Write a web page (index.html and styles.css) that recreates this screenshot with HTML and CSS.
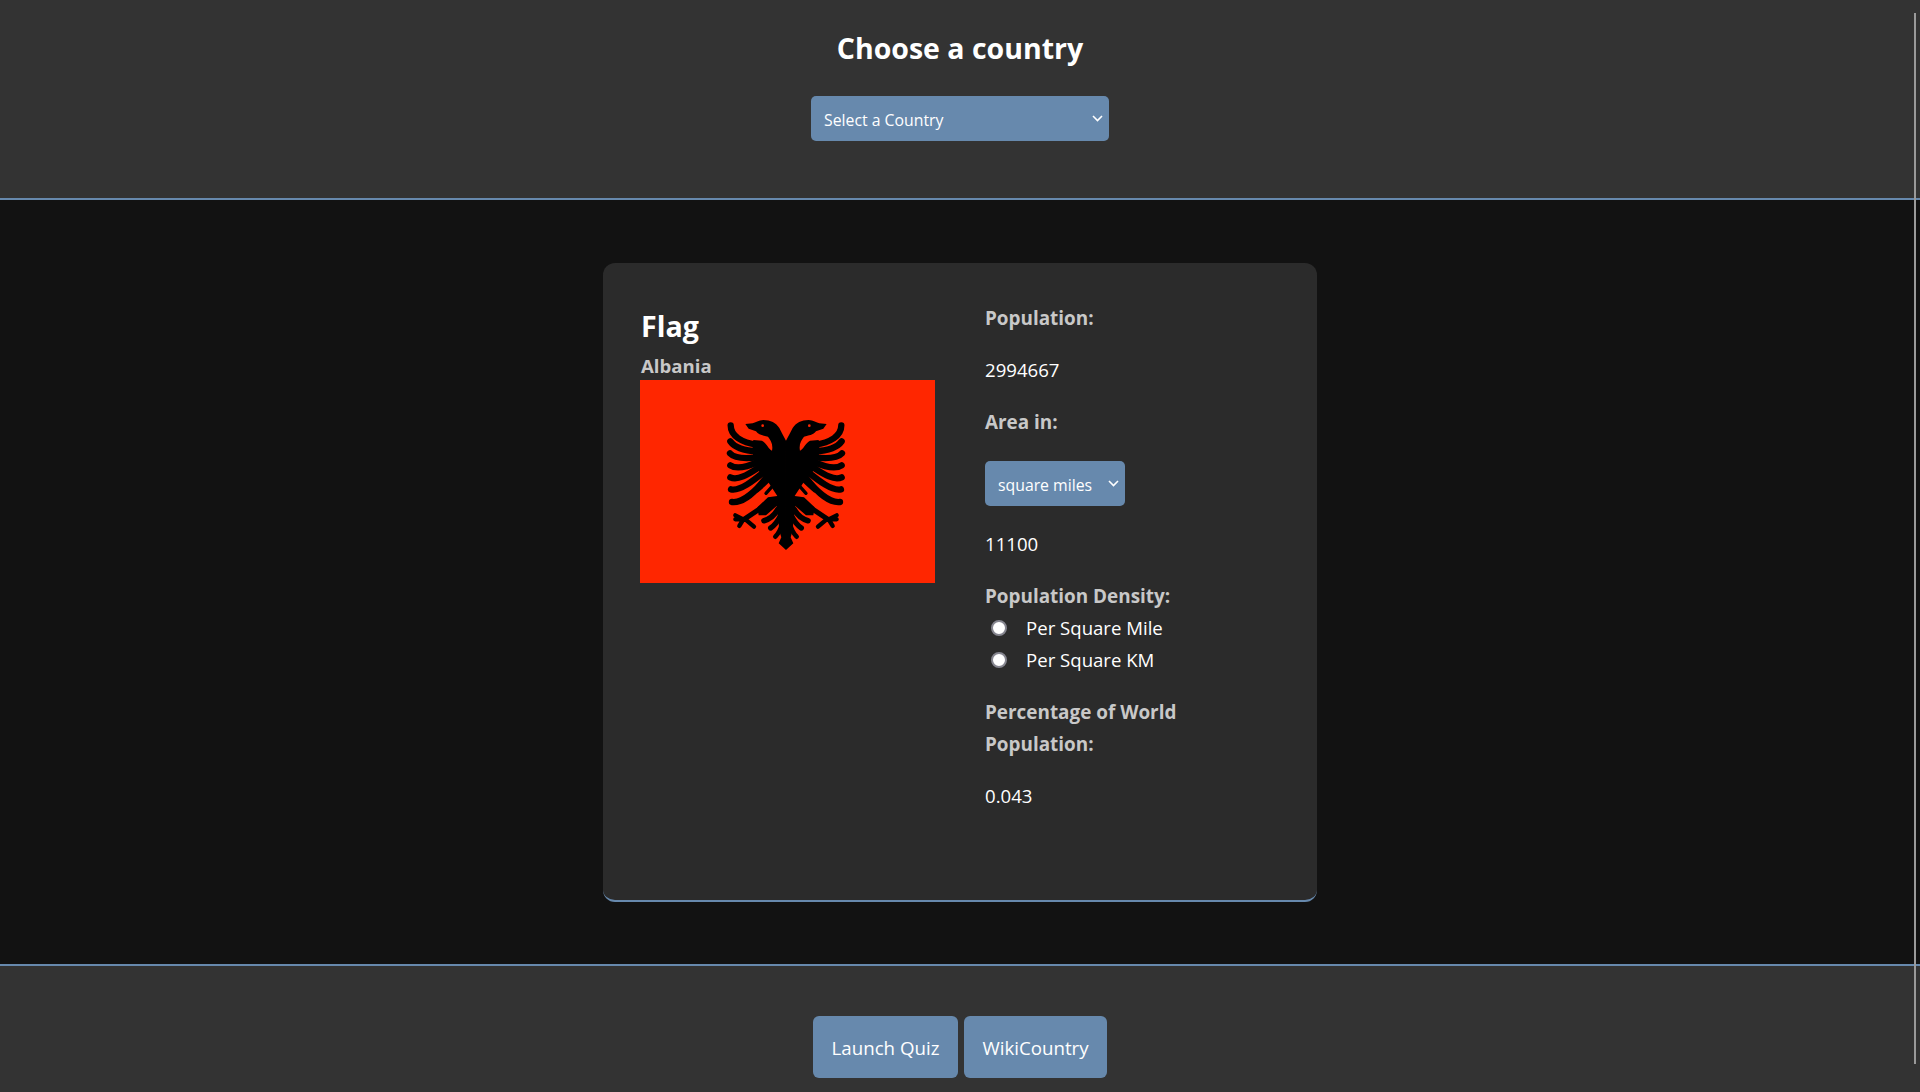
FILE: index.html
```html
<!DOCTYPE html>
<html lang="en">
<head>
<meta charset="utf-8">
<title>Choose a country</title>
<link rel="stylesheet" href="styles.css">
</head>
<body>
<div class="page">
  <header class="top">
    <h1 class="title">Choose a country</h1>
    <div class="select-wrap wrap-country">
      <select class="select"><option>Select a Country</option></select>
      <svg class="chev" viewBox="0 0 11 7"><path d="M1 1l4.5 4.5L10 1" fill="none" stroke="#fff" stroke-width="1.6"/></svg>
    </div>
  </header>
  <main class="main">
    <section class="card">
      <div class="col-flag">
        <h2 class="flag-title">Flag</h2>
        <div class="country-name">Albania</div>
        <svg class="flag" viewBox="0 0 295 203" aria-label="Flag of Albania">
          <rect width="295" height="203" fill="#ff2600"/>
          <g transform="translate(60 20) scale(0.3333)">
            <g id="half" fill="none" stroke="#000" stroke-linecap="round" stroke-linejoin="round">
              <path fill="#000" stroke="none" d="M258 122C250 108 245 98 238 84C228 68 212 60 190 60C176 60 166 68 158 70L136 72L146 86L168 94C176 106 190 106 204 110C212 120 220 134 216 152C206 148 202 132 186 122L160 120C154 150 160 190 178 215L206 248L232 288L204 292L172 322L176 346L198 346L230 318C236 345 234 385 244 412L236 430L258 450L258 122Z"/>
              <path stroke-width="19" d="M92 76C92 108 125 128 172 134"/>
              <path stroke-width="19" d="M91 124C105 144 135 152 172 154"/>
              <path stroke-width="19" d="M90 160C105 176 140 176 172 172"/>
              <path stroke-width="19" d="M91 196C110 209 145 199 174 186"/>
              <path stroke-width="19" d="M91 232C115 244 150 219 180 200"/>
              <path stroke-width="19" d="M93 268C120 274 160 242 192 216"/>
              <path stroke-width="19" d="M96 306C130 310 170 270 196 236"/>
              <path stroke-width="11" d="M172 272C186 260 200 246 212 236"/>
              <path stroke-width="10" d="M198 280L218 258"/>
              <path stroke-width="15" d="M186 322L132 358"/>
              <path stroke-width="13" d="M130 358L106 346M130 358L106 358M130 358L118 378M136 358L162 380"/>
              <path stroke-width="17" d="M192 362C208 358 222 348 234 328"/>
              <path stroke-width="16" d="M212 384C224 376 234 362 242 346"/>
              <path stroke-width="14" d="M226 410C236 400 242 388 246 372"/>
            </g>
            <use href="#half" transform="translate(516 0) scale(-1 1)"/>
            <circle cx="188" cy="77" r="4" fill="#ff2600"/>
            <circle cx="328" cy="77" r="4" fill="#ff2600"/>
          </g>
        </svg>
      </div>
      <div class="col-data">
        <p class="label">Population:</p>
        <p class="value">2994667</p>
        <p class="label">Area in:</p>
        <div class="select-wrap wrap-unit">
          <select class="select"><option>square miles</option></select>
          <svg class="chev" viewBox="0 0 11 7"><path d="M1 1l4.5 4.5L10 1" fill="none" stroke="#fff" stroke-width="1.6"/></svg>
        </div>
        <p class="value">11100</p>
        <p class="label label-tight">Population Density:</p>
        <label class="radio-row"><input class="radio" type="radio" name="density"><span>Per Square Mile</span></label>
        <label class="radio-row"><input class="radio" type="radio" name="density"><span>Per Square KM</span></label>
        <p class="label label-spaced">Percentage of World Population:</p>
        <p class="value">0.043</p>
      </div>
    </section>
  </main>
  <footer class="bottom">
    <button class="btn btn-quiz" type="button">Launch Quiz</button>
    <button class="btn btn-wiki" type="button">WikiCountry</button>
  </footer>
</div>
<div class="scroll-thumb"></div>
</body>
</html>
```
FILE: styles.css
```css
html, body {
  margin: 0;
  height: 100%;
  overflow: hidden;
}
body {
  background: #121212;
  color: #fff;
  font-family: "Open Sans", "Noto Sans", sans-serif;
  font-size: 18.6px;
  line-height: 32px;
}
.page {
  display: flex;
  flex-direction: column;
  height: 1092px;
}
.top {
  height: 198px;
  background: #333;
  border-bottom: 2px solid #6789ad;
  display: flex;
  flex-direction: column;
  align-items: center;
  flex: none;
}
.title {
  margin: 28px 0 0;
  font-size: 28.5px;
  line-height: 40px;
  font-weight: 700;
}
.select-wrap {
  position: relative;
  height: 45px;
}
.wrap-country {
  width: 298px;
  margin-top: 28px;
}
.wrap-unit {
  width: 140px;
  margin-top: 23px;
}
.select {
  appearance: none;
  display: block;
  width: 100%;
  height: 45px;
  background: #6789ad;
  color: #fff;
  border: none;
  border-radius: 5px;
  font-family: inherit;
  font-size: 15.8px;
  padding: 2px 0 0 13px;
}
.chev {
  position: absolute;
  top: 19px;
  right: 6px;
  width: 11px;
  height: 7px;
  pointer-events: none;
}
.main {
  height: 764px;
  flex: none;
  box-sizing: border-box;
  padding-top: 63px;
  display: flex;
  justify-content: center;
}
.card {
  width: 714px;
  height: 639px;
  box-sizing: border-box;
  padding: 37px;
  background: #2b2b2b;
  border-bottom: 2px solid #6789ad;
  border-radius: 12px;
  display: grid;
  grid-template-columns: 295px 295px;
  column-gap: 50px;
  align-content: start;
}
.flag-title {
  margin: 6px 0 0;
  padding-left: 1px;
  font-size: 28.6px;
  line-height: 40px;
  font-weight: 700;
}
.country-name {
  margin-top: 5px;
  padding-left: 1px;
  color: #c8c8c8;
  font-weight: 700;
  line-height: 30px;
  margin-bottom: -1px;
}
.flag {
  display: block;
  width: 295px;
  height: 203px;
}
.col-data {
  padding-top: 2px;
}
.label {
  margin: 0 0 20px;
  color: #c8c8c8;
  font-weight: 700;
  font-size: 18.9px;
}
.value {
  margin: 0 0 20px;
}
.label-tight {
  margin-bottom: 0;
}
.label-spaced {
  margin-top: 20px;
}
.radio-row {
  display: flex;
  align-items: center;
  height: 32px;
}
.radio {
  appearance: none;
  box-sizing: border-box;
  width: 16px;
  height: 16px;
  margin: 0 19px 0 6px;
  flex: none;
  background: #fff;
  border: 2px solid #85858f;
  border-radius: 50%;
}
.wrap-unit + .value {
  margin-top: 22px;
}
.bottom {
  flex: 1;
  background: #333;
  border-top: 2px solid #6789ad;
  display: flex;
  justify-content: center;
  align-items: flex-start;
  gap: 6px;
  padding-top: 50px;
}
.btn {
  height: 62px;
  background: #6789ad;
  color: #fff;
  border: none;
  border-radius: 6px;
  font-family: inherit;
  font-size: 18.7px;
  padding: 0;
}
.btn-quiz { width: 145px; }
.btn-wiki { width: 143px; }
.scroll-thumb {
  position: fixed;
  top: 13px;
  left: 1914px;
  width: 2px;
  height: 1051px;
  background: #9a9a9a;
}
```
